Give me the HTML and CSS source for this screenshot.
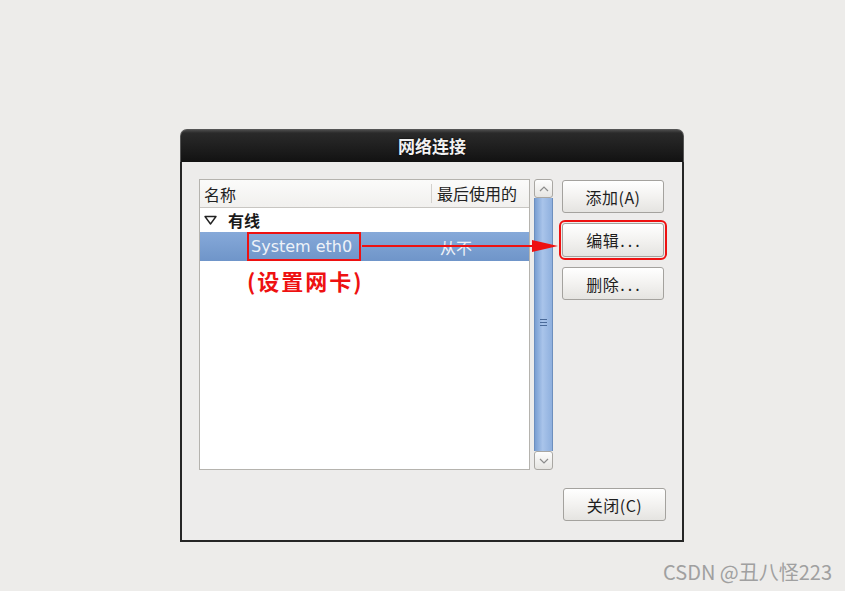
FILE: index.html
```html
<!DOCTYPE html>
<html>
<head>
<meta charset="utf-8">
<link rel="stylesheet" href="styles.css">
</head>
<body>
<div class="page">
  <div class="window">
    <div class="titlebar">网络连接</div>
    <div class="content">
      <div class="top">
        <div class="list">
          <div class="header">
            <div class="col-name">名称</div>
            <div class="col-last">最后使用的</div>
          </div>
          <div class="group">
            <svg class="tri" width="13" height="10" viewBox="0 0 13 10"><path d="M1 1.5 H12 L6.5 9 Z" fill="none" stroke="#222" stroke-width="1.4" stroke-linejoin="round"/></svg>
            <span>有线</span>
          </div>
          <div class="row selected">
            <span class="conn boxed">System eth0</span>
            <span class="never">从不</span>
          </div>
          <div class="note">(设置网卡)</div>
          <svg class="arrow" width="200" height="16" viewBox="0 0 200 16"><line x1="0" y1="8" x2="172" y2="8" stroke="#ee1111" stroke-width="2.2"/><path d="M170 2 L196 8 L170 14 Z" fill="#ee1111"/></svg>
        </div>
        <div class="scrollbar">
          <div class="sbtn"><svg width="10" height="6" viewBox="0 0 10 6"><path d="M1 5 L5 1 L9 5" fill="none" stroke="#8c8c8c" stroke-width="1.2"/></svg></div>
          <div class="trough"><div class="grip"><i></i><i></i><i></i></div></div>
          <div class="sbtn"><svg width="10" height="6" viewBox="0 0 10 6"><path d="M1 1 L5 5 L9 1" fill="none" stroke="#8c8c8c" stroke-width="1.2"/></svg></div>
        </div>
        <div class="buttons">
          <div class="btn">添加(A)</div>
          <div class="btn focus">编辑<span class="dots">...</span></div>
          <div class="btn">删除<span class="dots">...</span></div>
        </div>
      </div>
      <div class="bottom">
        <div class="btn close">关闭(C)</div>
      </div>
    </div>
  </div>
  <div class="watermark">CSDN @丑八怪223</div>
</div>
</body>
</html>
```
FILE: styles.css
```css
html, body {
  margin: 0;
  padding: 0;
  background: #edecea;
}
body {
  width: 845px;
  height: 591px;
  overflow: hidden;
  font-family: "DejaVu Sans", "Noto Sans CJK SC", sans-serif;
  font-size: 14px;
  color: #1a1a1a;
}
.page {
  position: relative;
  width: 845px;
  height: 591px;
  padding: 129px 0 0 180px;
  box-sizing: border-box;
}
.window {
  width: 504px;
  height: 413px;
  display: flex;
  flex-direction: column;
  background: #edeceb;
  box-sizing: border-box;
  border-radius: 7px 7px 0 0;
}
.titlebar {
  height: 33px;
  line-height: 32px;
  text-align: center;
  color: #f2f2f2;
  font-family: "Noto Sans CJK SC", sans-serif;
  font-weight: bold;
  font-size: 17px;
  background: linear-gradient(#4a4a4a 0px, #2a2a2a 3px, #1c1c1c 20px, #111 33px);
  border-radius: 7px 7px 0 0;
  border: 1px solid #555;
  border-bottom: none;
  box-sizing: border-box;
  text-shadow: 0 0 2px #000;
}
.content {
  flex: 1;
  border: 2px solid #262626;
  border-top: none;
  padding: 16px 17px 19px 17px;
  display: flex;
  flex-direction: column;
}
.top {
  display: flex;
  height: 292px;
}
.list {
  position: relative;
  width: 331px;
  height: 291px;
  background: #fff;
  border: 1px solid #b5b3ae;
  box-sizing: border-box;
  margin-top: 1px;
}
.header {
  display: flex;
  height: 27px;
  align-items: center;
  border-bottom: 1px solid #c8c6c2;
  background: linear-gradient(#fbfbfa, #f1f0ee);
  font-family: "Noto Sans CJK SC", sans-serif;
  font-size: 16px;
  color: #222;
}
.col-name {
  flex: 1;
  padding-left: 4px;
}
.col-last {
  width: 92px;
  padding-left: 5px;
  border-left: 1px solid #d3d1cd;
  height: 19px;
  line-height: 19px;
}
.group {
  display: flex;
  align-items: center;
  height: 24px;
  padding-left: 4px;
  font-family: "Noto Sans CJK SC", sans-serif;
  font-weight: bold;
  font-size: 16px;
}
.group .tri {
  margin-right: 11px;
}
.row {
  display: flex;
  align-items: center;
  height: 29px;
}
.selected {
  background: linear-gradient(#86a9d9, #6f95c9);
  color: #eef2f8;
}
.conn {
  margin-left: 47px;
  font-size: 16px;
  padding: 0 0 0 2px;
  height: 29px;
  line-height: 26px;
}
.boxed {
  box-sizing: border-box;
  flex: none;
  width: 114px;
  border: 2px solid #ee1111;
}
.never {
  margin-left: 79px;
  font-family: "Noto Sans CJK SC", sans-serif;
  font-size: 16px;
}
.note {
  position: absolute;
  left: 47px;
  top: 84px;
  color: #ee1111;
  font-family: "Noto Sans CJK SC", sans-serif;
  font-weight: bold;
  font-size: 22px;
  letter-spacing: 2px;
}
.arrow {
  position: absolute;
  left: 162px;
  top: 58px;
}
.scrollbar {
  width: 19px;
  height: 291px;
  margin-left: 4px;
  margin-top: 1px;
  display: flex;
  flex-direction: column;
}
.sbtn {
  height: 19px;
  border: 1px solid #a9a7a3;
  border-radius: 3px;
  background: linear-gradient(#fdfdfd, #e6e5e2);
  box-sizing: border-box;
  display: flex;
  align-items: center;
  justify-content: center;
}
.trough {
  flex: 1;
  background: linear-gradient(90deg, #7a9fd2, #a9c4ea 45%, #8fb0de);
  border-left: 1px solid #6d8fbe;
  border-right: 1px solid #6d8fbe;
  display: flex;
  align-items: center;
  justify-content: center;
}
.grip {
  display: flex;
  flex-direction: column;
  gap: 2px;
  margin-bottom: 4px;
}
.grip i {
  display: block;
  width: 7px;
  height: 1px;
  background: #4a6a99;
}
.buttons {
  margin-left: 9px;
  display: flex;
  flex-direction: column;
  gap: 10px;
  margin-top: 2px;
}
.btn {
  width: 102px;
  height: 33px;
  box-sizing: border-box;
  border: 1px solid #a4a29e;
  border-radius: 3px;
  background: linear-gradient(#ffffff, #f3f2f0 50%, #e5e4e1);
  display: flex;
  align-items: center;
  justify-content: center;
  font-family: "Noto Sans CJK SC", sans-serif;
  font-size: 16px;
  color: #1e1e1e;
  letter-spacing: 0.5px;
}
.dots {
  letter-spacing: 3px;
  margin-left: 1px;
  margin-right: -3px;
}
.btn.focus {
  height: 34px;
  outline: 2px solid #ee1111;
  outline-offset: 1px;
}
.bottom {
  margin-top: auto;
  display: flex;
  justify-content: flex-end;
  margin-right: -1px;
}
.close {
  width: 103px;
}
.watermark {
  position: absolute;
  left: 663px;
  top: 557px;
  color: #a0a0a0;
  font-family: "Noto Sans CJK SC", sans-serif;
  font-size: 20px;
}
```
